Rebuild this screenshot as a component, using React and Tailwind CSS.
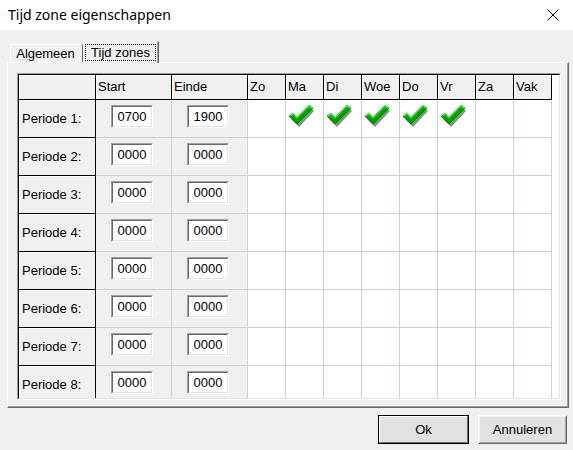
import React from 'react'

const days = ['Zo', 'Ma', 'Di', 'Woe', 'Do', 'Vr', 'Za', 'Vak']

const periods = [
  { label: 'Periode 1:', start: '0700', end: '1900', checked: [false, true, true, true, true, true, false, false] },
  ...[2, 3, 4, 5, 6, 7, 8].map((n) => ({
    label: `Periode ${n}:`,
    start: '0000',
    end: '0000',
    checked: [false, false, false, false, false, false, false, false],
  })),
]

const fixedCell = 'flex items-center border-r border-b border-black bg-[#f0f0f0] shadow-[inset_1px_1px_0_#fff]'
const lineCell = 'border-r border-b border-[#c5d3e1]'

function CheckMark() {
  return (
    <svg width="27" height="25" viewBox="0 0 27 25">
      <polygon points="3,16 7,13 11,17 23,5 26,8 11,24" fill="#8c8c8c" />
      <polygon points="1,13 5,10 9,14 21,2 25,5 9,21" fill="#00a000" />
      <polyline points="1.5,13 5,10.5 9,14.5 21,2.5 24.5,5" fill="none" stroke="#40f040" strokeWidth="1.6" strokeLinejoin="round" />
      <polyline points="25,5 9,21 1,13" fill="none" stroke="#007a00" strokeWidth="1" />
    </svg>
  )
}

function TimeBox({ value }) {
  return (
    <div className="ml-[15px] mt-[5px] h-[23px] w-[42px] border border-t-[#a0a0a0] border-l-[#a0a0a0] border-b-white border-r-white">
      <div className="flex h-full w-full items-center justify-center border border-t-[#696969] border-l-[#696969] border-b-[#e3e3e3] border-r-[#e3e3e3] bg-white text-[13px] text-black">
        {value}
      </div>
    </div>
  )
}

export default function App() {
  return (
    <div className="h-[450px] w-[573px] overflow-hidden bg-[#f0f0f0] text-black" style={{ fontFamily: '"Liberation Sans", Arial, sans-serif' }}>
      <div className="flex h-[30px] items-center justify-between bg-white pl-[8px] pr-[14px]">
        <span className="text-[14px] leading-none text-black" style={{ fontFamily: '"Noto Sans", sans-serif' }}>
          Tijd zone eigenschappen
        </span>
        <svg width="12" height="12" viewBox="0 0 12 12">
          <path d="M0.5 0.5 L11.5 11.5 M11.5 0.5 L0.5 11.5" stroke="#000" strokeWidth="1" />
        </svg>
      </div>

      <div className="pl-[7px] pt-[11px]">
        <div className="flex h-[21px] items-end pl-[3px] text-[13px]">
          <div className="flex h-[18px] w-[73px] items-center justify-center border-l border-t border-r border-l-white border-t-white border-r-[#696969] pr-[2px]">
            Algemeen
          </div>
          <div className="relative z-10 -mb-px flex h-[22px] w-[76px] border-l border-t border-r border-l-white border-t-white border-r-[#696969] bg-[#f0f0f0]">
            <div className="flex h-full w-full border-r border-[#a0a0a0] px-px pb-[2px] pt-[2px]">
              <div className="flex h-[17px] w-full items-center justify-center border border-dotted border-black">Tijd zones</div>
            </div>
          </div>
        </div>

        <div className="h-[346px] w-[562px] border border-l-white border-t-white border-r-[#696969] border-b-[#696969]">
          <div className="h-full w-full border-r border-b border-[#a0a0a0] pl-[9px] pt-[10px]">
            <div className="h-[327px] w-[544px] border border-t-[#a0a0a0] border-l-[#a0a0a0] border-b-white border-r-white">
              <div className="h-full w-full overflow-hidden border border-t-black border-l-black border-b-[#e3e3e3] border-r-[#e3e3e3] bg-white text-[13px]">
                <div className="flex h-[25px]">
                  <div className={`${fixedCell} w-[77px]`} />
                  <div className={`${fixedCell} w-[76px] pl-[2px]`}>Start</div>
                  <div className={`${fixedCell} w-[76px] pl-[2px]`}>Einde</div>
                  {days.map((day) => (
                    <div key={day} className={`${fixedCell} w-[38px] pl-[2px]`}>
                      {day}
                    </div>
                  ))}
                </div>

                {periods.map((period) => (
                  <div key={period.label} className="flex h-[38px]">
                    <div className={`${fixedCell} w-[77px] pl-[3px]`}>{period.label}</div>
                    <div className={`${lineCell} w-[76px] bg-[#f0f0f0]`}>
                      <TimeBox value={period.start} />
                    </div>
                    <div className={`${lineCell} w-[76px] bg-[#f0f0f0]`}>
                      <TimeBox value={period.end} />
                    </div>
                    {period.checked.map((on, i) => (
                      <div key={days[i]} className={`${lineCell} w-[38px] bg-white pl-[2px] pt-[3px]`}>
                        {on ? <CheckMark /> : null}
                      </div>
                    ))}
                  </div>
                ))}
              </div>
            </div>
          </div>
        </div>

        <div className="mt-[7px] flex justify-end gap-[9px] pr-[6px] text-[13px] font-normal">
          <button type="button" className="h-[29px] w-[91px] border border-black bg-[#e1e1e1] font-normal">
            <div className="flex h-full w-full items-center justify-center border border-t-white border-l-white border-b-[#696969] border-r-[#696969]">
              Ok
            </div>
          </button>
          <button type="button" className="h-[29px] w-[89px] border border-t-white border-l-white border-b-[#696969] border-r-[#696969] bg-[#e1e1e1] font-normal">
            <div className="flex h-full w-full items-center justify-center border border-t-[#f0f0f0] border-l-[#f0f0f0] border-b-[#a0a0a0] border-r-[#a0a0a0]">
              Annuleren
            </div>
          </button>
        </div>
      </div>
    </div>
  )
}
